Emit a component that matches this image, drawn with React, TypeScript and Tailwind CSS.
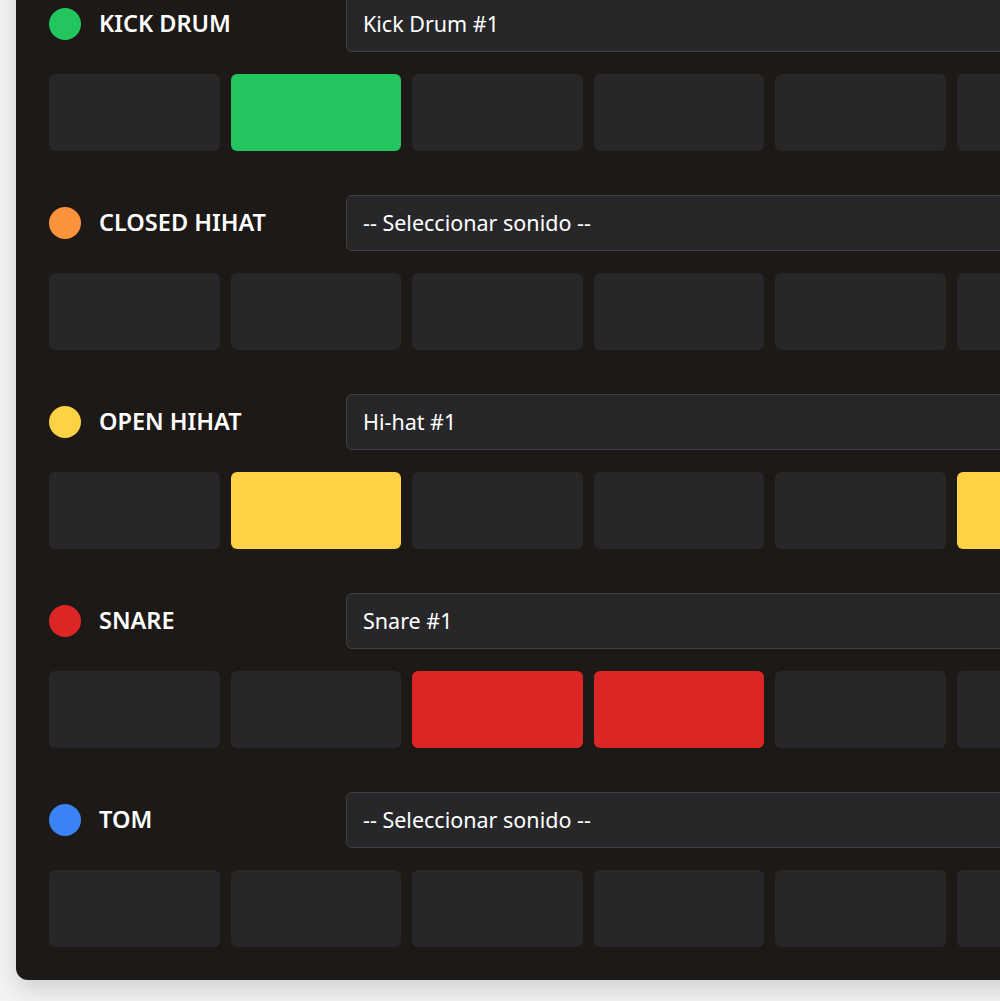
import React from 'react';

const tracks = [
  { name: 'KICK DRUM', color: 'bg-[#22c55e]', sound: 'Kick Drum #1', steps: [1] },
  { name: 'CLOSED HIHAT', color: 'bg-[#fb923c]', sound: '-- Seleccionar sonido --', steps: [] as number[] },
  { name: 'OPEN HIHAT', color: 'bg-[#fdd245]', sound: 'Hi-hat #1', steps: [1, 5] },
  { name: 'SNARE', color: 'bg-[#dc2626]', sound: 'Snare #1', steps: [2, 3] },
  { name: 'TOM', color: 'bg-[#3b82f6]', sound: '-- Seleccionar sonido --', steps: [] as number[] },
];

export default function App() {
  return (
    <div className="min-h-screen w-full overflow-hidden bg-[#f4f4f4] px-4 font-['Noto_Sans',sans-serif]">
      {/* Sequencer card */}
      <div className="-mt-[36px] w-[1506px] rounded-xl bg-[#1c1917] pt-8 pb-[33px] pl-[33px] pr-8 shadow-[0_10px_25px_rgba(0,0,0,0.15)]">
        <div className="flex flex-col gap-[44px]">
          {tracks.map((t) => (
            <div key={t.name} className="flex flex-col gap-[22px]">
              <div className="flex items-center gap-4">
                <div className="flex w-[281px] items-center gap-[18px]">
                  <span className={`h-8 w-8 rounded-full ${t.color}`}></span>
                  <span className="text-[23.5px] font-semibold text-white">{t.name}</span>
                </div>
                <div className="flex h-14 flex-1 items-center rounded-md border border-[#3f3f46] bg-[#27272a] px-4 text-[21.5px] text-white">
                  {t.sound}
                </div>
              </div>
              <div className="grid grid-cols-[repeat(8,170.6px)] gap-[11px]">
                {Array.from({ length: 8 }).map((_, i) => (
                  <div
                    key={i}
                    className={`h-[77px] rounded-md ${t.steps.includes(i) ? t.color : 'bg-[#27272a]'}`}
                  ></div>
                ))}
              </div>
            </div>
          ))}
        </div>
      </div>
    </div>
  );
}
